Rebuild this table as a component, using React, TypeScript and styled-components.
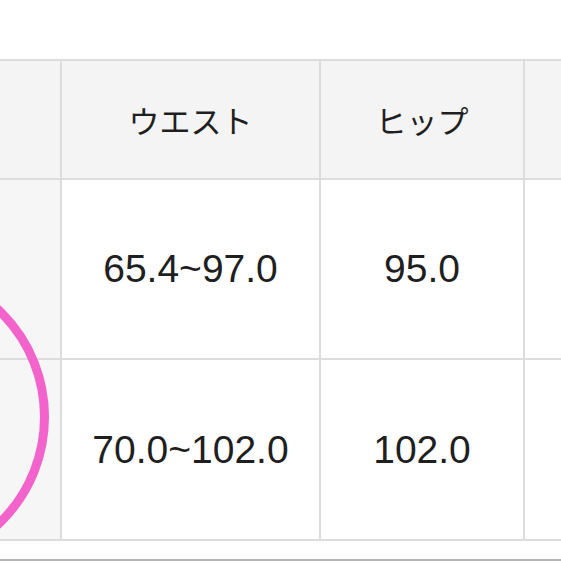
import styled, { createGlobalStyle } from "styled-components";

const GlobalStyle = createGlobalStyle`
    html, body {
        margin: 0;
        padding: 0;
        background: #ffffff;
    }
    body {
        font-family: "Liberation Sans", Arial, "Noto Sans CJK JP", sans-serif;
        color: #1f1f1f;
    }
`;

const Page = styled.div`
    position: relative;
    width: 561px;
    height: 561px;
    overflow: hidden;
    background: #ffffff;
`;

// the table is wider than the window: its first and last columns are cropped
const SizeGrid = styled.div`
    display: grid;
    grid-template-columns: 100px 257px 202px 200px;
    grid-template-rows: 117px 178px 179px;
    gap: 2px;
    padding: 2px;
    margin: 59px 0 0 -42px;
    width: max-content;
    background: #dcdcdc;
`;

const Cell = styled.div<{ $head?: boolean; $side?: boolean }>`
    display: flex;
    align-items: center;
    justify-content: center;
    background: ${(p) => (p.$head ? "#f4f4f4" : p.$side ? "#f6f6f6" : "#ffffff")};
    font-family: ${(p) =>
        p.$head
            ? `"Noto Sans CJK JP", "Noto Sans", sans-serif`
            : `"Liberation Sans", Arial, sans-serif`};
    font-size: ${(p) => (p.$head ? "31px" : "39px")};
    font-weight: 400;
    color: #1f1f1f;
    white-space: nowrap;
`;

const BottomRule = styled.div`
    margin-top: 18px;
    height: 2px;
    background: #b4b4b4;
`;

const Marker = styled.svg`
    position: absolute;
    left: 0;
    top: 0;
    pointer-events: none;
`;

const head = ["", "ウエスト", "ヒップ", ""];
const rows = [
    ["", "65.4~97.0", "95.0", ""],
    ["", "70.0~102.0", "102.0", ""],
];

export default function App() {
    return (
        <Page>
            <GlobalStyle />
            <SizeGrid>
                {head.map((h, i) => (
                    <Cell key={"h" + i} $head>
                        {h}
                    </Cell>
                ))}
                {rows.map((r, ri) =>
                    r.map((v, ci) => (
                        <Cell key={ri + "-" + ci} $side={ci === 0}>
                            {v}
                        </Cell>
                    ))
                )}
            </SizeGrid>
            <BottomRule />
            <Marker width="561" height="561" viewBox="0 0 561 561">
                <circle cx="-103" cy="417" r="147.5" fill="none" stroke="#f264cb" strokeWidth="9" />
            </Marker>
        </Page>
    );
}
